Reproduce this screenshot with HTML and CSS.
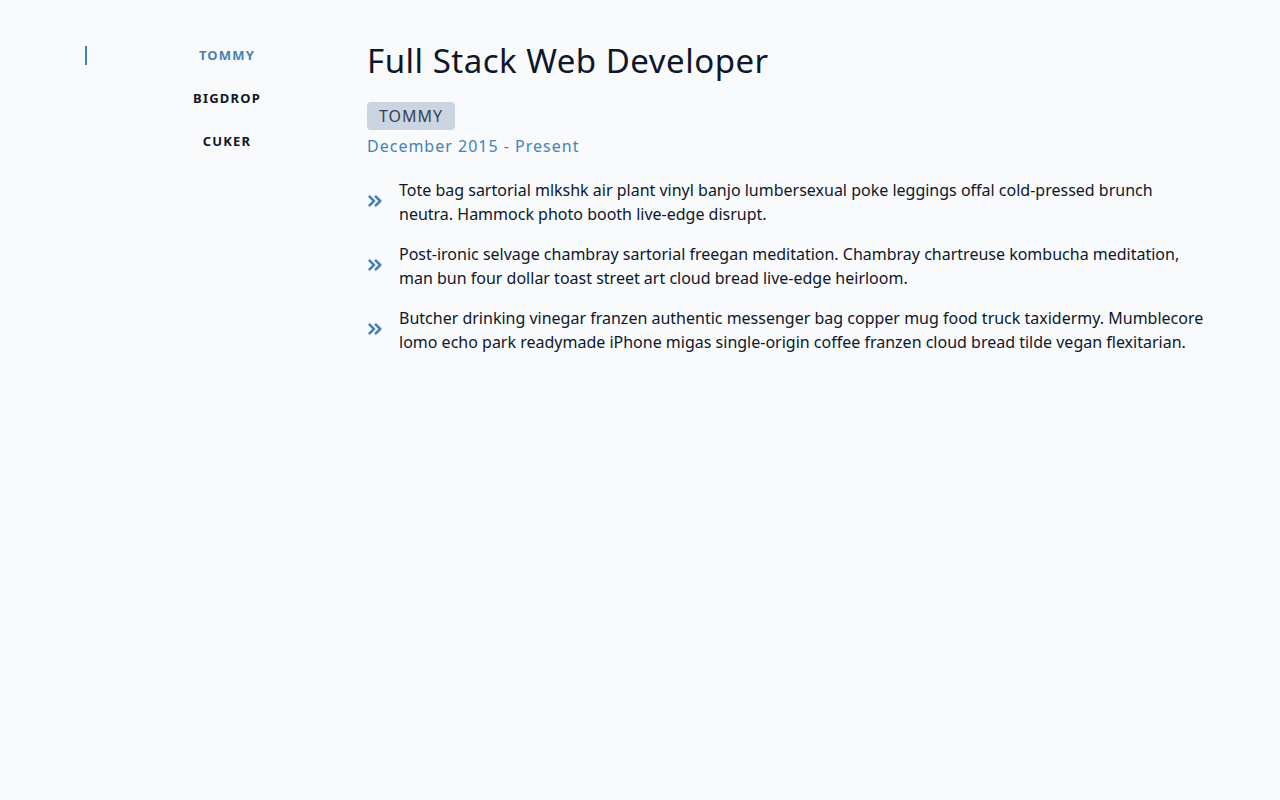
FILE: index.html
```html
<!DOCTYPE html>
<html lang="en">
<head>
<meta charset="utf-8">
<title>Experience</title>
<link rel="stylesheet" href="styles.css">
</head>
<body>
<main class="container">
  <nav class="tabs">
    <button class="tab active">TOMMY</button>
    <button class="tab">BIGDROP</button>
    <button class="tab">CUKER</button>
  </nav>
  <section class="job">
    <h1 class="title">Full Stack Web Developer</h1>
    <span class="badge">TOMMY</span>
    <p class="date">December 2015 - Present</p>
    <ul class="duties">
      <li>
        <svg class="icon" viewBox="0 0 14 12" width="14" height="12"><path d="M1.6 1.6L6 6l-4.4 4.4M7.8 1.6L12.2 6l-4.4 4.4" fill="none" stroke="currentColor" stroke-width="2.6" stroke-linecap="round" stroke-linejoin="round"/></svg>
        <span>Tote bag sartorial mlkshk air plant vinyl banjo lumbersexual poke leggings offal cold-pressed brunch neutra. Hammock photo booth live-edge disrupt.</span>
      </li>
      <li>
        <svg class="icon" viewBox="0 0 14 12" width="14" height="12"><path d="M1.6 1.6L6 6l-4.4 4.4M7.8 1.6L12.2 6l-4.4 4.4" fill="none" stroke="currentColor" stroke-width="2.6" stroke-linecap="round" stroke-linejoin="round"/></svg>
        <span>Post-ironic selvage chambray sartorial freegan meditation. Chambray chartreuse kombucha meditation, man bun four dollar toast street art cloud bread live-edge heirloom.</span>
      </li>
      <li>
        <svg class="icon" viewBox="0 0 14 12" width="14" height="12"><path d="M1.6 1.6L6 6l-4.4 4.4M7.8 1.6L12.2 6l-4.4 4.4" fill="none" stroke="currentColor" stroke-width="2.6" stroke-linecap="round" stroke-linejoin="round"/></svg>
        <span>Butcher drinking vinegar franzen authentic messenger bag copper mug food truck taxidermy. Mumblecore lomo echo park readymade iPhone migas single-origin coffee franzen cloud bread tilde vegan flexitarian.</span>
      </li>
    </ul>
  </section>
</main>
</body>
</html>
```
FILE: styles.css
```css
* { box-sizing: border-box; }
html, body {
  margin: 0;
  background: #f8fafc;
  color: #0f172a;
  font-family: "Noto Sans", "Open Sans", sans-serif;
}
.container {
  width: 1120px;
  margin-left: 85px;
  padding-top: 36px;
  display: flex;
}
.tabs {
  width: 282px;
  flex: none;
  display: flex;
  flex-direction: column;
  padding-top: 10px;
}
.tab {
  position: relative;
  background: none;
  border: 0;
  border-left: 2px solid transparent;
  height: 19px;
  margin-bottom: 24px;
  padding: 0;
  font-family: inherit;
  font-size: 13px;
  font-weight: 700;
  letter-spacing: 1.2px;
  color: #0f172a;
  cursor: pointer;
  line-height: 19px;
}
.tab.active {
  color: #4682b4;
  border-left-color: #4682b4;
}
.job {
  flex: 1;
  min-width: 0;
}
.title {
  margin: 0;
  font-size: 33px;
  font-weight: 400;
  line-height: 50px;
  letter-spacing: 0.5px;
  color: #0f172a;
}
.badge {
  display: inline-block;
  margin-top: 16px;
  background: #cbd5e1;
  color: #334155;
  border-radius: 4px;
  padding: 0 12px;
  height: 28px;
  line-height: 28px;
  font-size: 16px;
  letter-spacing: 1px;
}
.date {
  margin: 2px 0 0;
  color: #4682b4;
  font-size: 16px;
  letter-spacing: 1px;
  line-height: 28px;
}
.duties {
  list-style: none;
  margin: 18px 0 0;
  padding: 0;
}
.duties li {
  display: flex;
  align-items: center;
  gap: 17px;
  margin-bottom: 16px;
  font-size: 16px;
  line-height: 24px;
}
.icon {
  flex: none;
  color: #4682b4;
  margin-left: 1px;
  position: relative;
  top: -1px;
}
```
